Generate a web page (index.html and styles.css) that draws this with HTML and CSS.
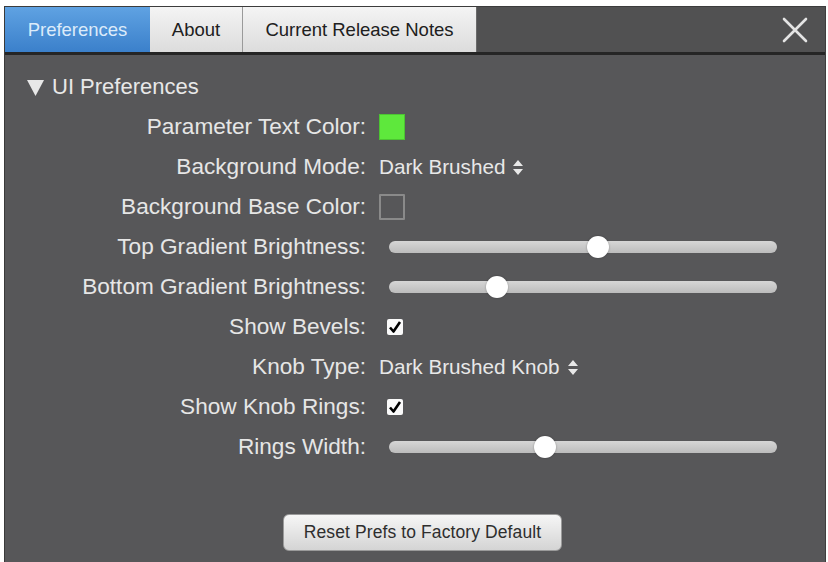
FILE: index.html
```html
<!DOCTYPE html>
<html>
<head>
<meta charset="utf-8">
<link rel="stylesheet" href="styles.css">
</head>
<body>
<div class="window">
  <div class="tabbar">
    <div class="tab tab-active tab-prefs">Preferences</div>
    <div class="tab tab-about">About</div>
    <div class="tab tab-notes">Current Release Notes</div>
    <div class="close">
      <svg width="26" height="26" viewBox="0 0 26 26"><path d="M2 2 L24 24 M24 2 L2 24" stroke="#e4e4e4" stroke-width="2.6" stroke-linecap="round"/></svg>
    </div>
  </div>
  <div class="content">
    <div class="section-head">
      <svg class="tri" width="17" height="17" viewBox="0 0 17 17"><path d="M0 1 L17 1 L8.5 17 Z" fill="#e8e8e8"/></svg>
      <span>UI Preferences</span>
    </div>
    <div class="form">
      <div class="label">Parameter Text Color:</div>
      <div class="control"><div class="swatch swatch-green"></div></div>

      <div class="label">Background Mode:</div>
      <div class="control"><span class="value">Dark Brushed</span>
        <svg class="stepper" width="10" height="15" viewBox="0 0 10 15"><path d="M5 0 L10 6 L0 6 Z M0 9 L10 9 L5 15 Z" fill="#e8e8e8"/></svg></div>

      <div class="label">Background Base Color:</div>
      <div class="control"><div class="swatch swatch-empty"></div></div>

      <div class="label">Top Gradient Brightness:</div>
      <div class="control"><div class="slider"><div class="thumb" style="left:53.9%"></div></div></div>

      <div class="label">Bottom Gradient Brightness:</div>
      <div class="control"><div class="slider"><div class="thumb" style="left:27.8%"></div></div></div>

      <div class="label">Show Bevels:</div>
      <div class="control"><div class="check"><svg width="14" height="14" viewBox="0 0 14 14"><path d="M2 7.5 L5.5 11.5 L12 2" stroke="#000" stroke-width="2.6" fill="none" stroke-linejoin="round"/></svg></div></div>

      <div class="label">Knob Type:</div>
      <div class="control"><span class="value">Dark Brushed Knob</span>
        <svg class="stepper" width="10" height="15" viewBox="0 0 10 15"><path d="M5 0 L10 6 L0 6 Z M0 9 L10 9 L5 15 Z" fill="#e8e8e8"/></svg></div>

      <div class="label">Show Knob Rings:</div>
      <div class="control"><div class="check"><svg width="14" height="14" viewBox="0 0 14 14"><path d="M2 7.5 L5.5 11.5 L12 2" stroke="#000" stroke-width="2.6" fill="none" stroke-linejoin="round"/></svg></div></div>

      <div class="label">Rings Width:</div>
      <div class="control"><div class="slider"><div class="thumb" style="left:40.2%"></div></div></div>
    </div>
    <div class="button-row">
      <div class="button">Reset Prefs to Factory Default</div>
    </div>
  </div>
</div>
</body>
</html>
```
FILE: styles.css
```css
html, body {
  margin: 0;
  padding: 0;
  background: #ffffff;
}
body {
  font-family: "Liberation Sans", Arial, sans-serif;
  overflow: hidden;
}
.window {
  margin: 6px 2px 0 4px;
  height: 556px;
  background: #575759;
  border-left: 1px solid #3a3a3a;
  border-right: 1px solid #3e3e3e;
  display: flex;
  flex-direction: column;
}
.tabbar {
  height: 45px;
  background: #515152;
  border-top: 1px solid #3c3c3c;
  border-bottom: 3px solid #252525;
  display: flex;
  align-items: stretch;
}
.tab {
  display: flex;
  align-items: center;
  justify-content: center;
  font-size: 18.5px;
  color: #202020;
  background: linear-gradient(#f4f4f4, #dcdcdc);
  box-sizing: border-box;
  border-right: 1px solid #9a9a9a;
}
.tab-active {
  background: linear-gradient(#5fa2e2, #3b80cb);
  color: #dcebfa;
  border-right: none;
}
.tab-prefs { width: 145px; }
.tab-about { width: 93px; }
.tab-notes { width: 234px; border-right: 1px solid #6a6a6a; }
.close {
  margin-left: auto;
  margin-right: 17px;
  display: flex;
  align-items: center;
}
.close svg { display: block; }
.content {
  padding-top: 12px;
  display: flex;
  flex-direction: column;
}
.section-head {
  height: 40px;
  display: flex;
  align-items: center;
  padding-left: 22px;
  gap: 8px;
  color: #e8e8e8;
  font-size: 22px;
}
.tri { display: block; }
.form {
  display: grid;
  grid-template-columns: 361px 1fr;
  column-gap: 13px;
  grid-auto-rows: 40px;
}
.label {
  text-align: right;
  font-size: 22.6px;
  color: #e6e6e6;
  display: flex;
  align-items: center;
  justify-content: flex-end;
}
.control {
  display: flex;
  align-items: center;
  gap: 8px;
}
.value {
  font-size: 20.7px;
  color: #e8e8e8;
}
.stepper { display: block; }
.swatch {
  width: 26px;
  height: 26px;
  box-sizing: border-box;
}
.swatch-green {
  background: #5ee83c;
  border: 1px solid #4cc432;
}
.swatch-empty {
  border: 2px solid #8a8a8a;
  border-radius: 1px;
}
.slider {
  position: relative;
  margin-left: 10px;
  width: 388px;
  height: 12px;
  border-radius: 6px;
  background: linear-gradient(#d6d6d6, #bcbcbc);
}
.thumb {
  position: absolute;
  top: 50%;
  width: 22px;
  height: 22px;
  border-radius: 50%;
  background: #ffffff;
  box-shadow: 0 0 2px rgba(0,0,0,0.35);
  transform: translate(-50%, -50%);
}
.check {
  margin-left: 8px;
  width: 16px;
  height: 16px;
  border-radius: 2px;
  background: #fafafa;
  display: flex;
  align-items: center;
  justify-content: center;
}
.check svg { display: block; }
.button-row {
  margin-top: 47px;
  padding-left: 278px;
  display: flex;
}
.button {
  width: 279px;
  height: 37px;
  box-sizing: border-box;
  border-radius: 6px;
  background: linear-gradient(#f6f6f6, #d4d4d4);
  border: 1px solid #9a9a9a;
  display: flex;
  align-items: center;
  justify-content: center;
  font-size: 17.5px;
  color: #2e2e2e;
  letter-spacing: 0.1px;
}
```
